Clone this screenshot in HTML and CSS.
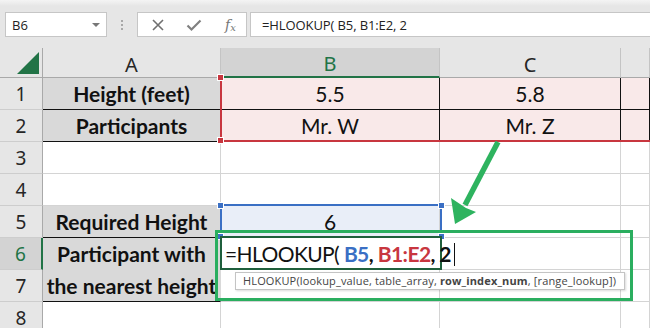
FILE: index.html
```html
<!DOCTYPE html>
<html lang="en">
<head>
  <meta charset="UTF-8" />
  <title>HLOOKUP nearest height</title>
  <link rel="stylesheet" href="styles.css">
</head>
<body>

  <div class="toolbar">
    <div class="name-box">
      <span>B6</span>
      <span class="caret"></span>
    </div>
    <div class="grip"><i></i><i></i><i></i></div>
    <div class="fx-buttons">
      <svg class="btn-icon" width="14" height="14" viewBox="0 0 14 14">
        <path d="M2 2 L12 12 M12 2 L2 12" stroke="#707070" stroke-width="1.6" fill="none"/>
      </svg>
      <svg class="btn-icon" width="16" height="14" viewBox="0 0 16 14">
        <path d="M1.5 7.5 L5.5 11.5 L14.5 2.5" stroke="#808080" stroke-width="2.2" fill="none"/>
      </svg>
      <span class="fx">f<sub>x</sub></span>
    </div>
    <div class="formula">=HLOOKUP( B5, B1:E2, 2</div>
  </div>

  <div class="sheet">
    <!-- column headers -->
    <div class="corner"><span class="select-all"></span></div>
    <div class="col-head">A</div>
    <div class="col-head active">B</div>
    <div class="col-head">C</div>
    <div class="col-head"></div>

    <!-- row 1 -->
    <div class="row-head">1</div>
    <div class="cell label">Height (feet)</div>
    <div class="cell data">5.5</div>
    <div class="cell data">5.8</div>
    <div class="cell data"></div>

    <!-- row 2 -->
    <div class="row-head">2</div>
    <div class="cell label">Participants</div>
    <div class="cell data">Mr. W</div>
    <div class="cell data">Mr. Z</div>
    <div class="cell data"></div>

    <!-- row 3 -->
    <div class="row-head">3</div>
    <div class="cell"></div>
    <div class="cell"></div>
    <div class="cell"></div>
    <div class="cell"></div>

    <!-- row 4 -->
    <div class="row-head">4</div>
    <div class="cell"></div>
    <div class="cell"></div>
    <div class="cell"></div>
    <div class="cell"></div>

    <!-- row 5 -->
    <div class="row-head">5</div>
    <div class="cell label">Required Height</div>
    <div class="cell lookup">6</div>
    <div class="cell"></div>
    <div class="cell"></div>

    <!-- rows 6 & 7, A6:A7 merged -->
    <div class="row-head active">6</div>
    <div class="cell label merged">Participant with<br>the nearest height</div>
    <div class="cell"></div>
    <div class="cell"></div>
    <div class="cell"></div>

    <div class="row-head">7</div>
    <div class="cell"></div>
    <div class="cell"></div>
    <div class="cell"></div>

    <!-- row 8 -->
    <div class="row-head">8</div>
    <div class="cell"></div>
    <div class="cell"></div>
    <div class="cell"></div>
    <div class="cell"></div>

    <!-- overlays -->
    <div class="range range-red">
      <span class="handle tl"></span>
      <span class="handle bl"></span>
    </div>
    <div class="range range-blue">
      <span class="handle tl"></span>
      <span class="handle tr"></span>
      <span class="handle bl"></span>
      <span class="handle br"></span>
    </div>

    <div class="editor">
      <span class="edit-text">=HLOOKUP( <b class="ref-blue">B5</b><b>,</b> <b class="ref-red">B1:E2</b><b>, 2</b><span class="cursor"></span></span>
    </div>

    <div class="tooltip">HLOOKUP(lookup_value, table_array, <b>row_index_num</b>, [range_lookup])</div>

    <div class="highlight"></div>

    <svg class="arrow" width="70" height="92" viewBox="0 0 70 92">
      <path d="M58 4 L25 67" stroke="#2eb35f" stroke-width="5.5" fill="none"/>
      <polygon points="15,86 36,74 26,70 11,60" fill="#2eb35f"/>
    </svg>
  </div>

</body>
</html>
```

FILE: styles.css
```css
body {
  margin: 0;
  width: 650px;
  height: 328px;
  overflow: hidden;
  background: #fff;
  font-family: "Lato", sans-serif;
}

/* formula bar */

.toolbar {
  height: 48px;
  box-sizing: border-box;
  padding-top: 12px;
  display: flex;
  align-items: flex-start;
  background: linear-gradient(#f4f4f4, #e6e6e6 6px);
}

.name-box,
.fx-buttons,
.formula {
  height: 25px;
  box-sizing: border-box;
  background: #fff;
  border: 1px solid #c6c6c6;
  display: flex;
  align-items: center;
  font-family: "Open Sans", sans-serif;
  font-size: 13px;
  color: #222;
}

.name-box {
  margin-left: 5px;
  width: 102px;
  padding: 0 6px 0 6px;
  justify-content: space-between;
}

.caret {
  width: 0;
  height: 0;
  border-left: 4px solid transparent;
  border-right: 4px solid transparent;
  border-top: 4px solid #777;
}

.grip {
  width: 30px;
  height: 25px;
  display: flex;
  flex-direction: column;
  align-items: center;
  justify-content: center;
  gap: 2px;
}

.grip i {
  width: 2px;
  height: 2px;
  background: #a8a8a8;
}

.fx-buttons {
  width: 110px;
  padding-left: 13px;
  gap: 21px;
}

.fx {
  font-family: "DejaVu Serif", serif;
  font-style: italic;
  font-size: 14px;
  color: #777;
  margin-left: 2px;
}

.fx sub {
  font-size: 10px;
  vertical-align: baseline;
  position: relative;
  top: 1px;
}

.formula {
  flex: 1;
  margin-left: 3px;
  padding-left: 11px;
  border-right: none;
  letter-spacing: -0.1px;
}

/* grid */

.sheet {
  position: relative;
  display: grid;
  grid-template-columns: 43px 178px 219px 181px 1fr;
  grid-template-rows: 30px repeat(8, 32px);
}

.corner,
.col-head,
.row-head {
  background: #e6e6e6;
  box-sizing: border-box;
  font-family: "Noto Sans", sans-serif;
  color: #262626;
  display: flex;
  align-items: center;
  justify-content: center;
}

.corner {
  border-right: 1px solid #a9a9a9;
  border-bottom: 1px solid #a9a9a9;
  align-items: flex-end;
  justify-content: flex-end;
  padding: 0 3px 3px 0;
}

.select-all {
  width: 22px;
  height: 22px;
  background: #217346;
  clip-path: polygon(100% 0, 100% 100%, 0 100%);
}

.col-head {
  font-size: 20px;
  border-right: 1px solid #c4c4c4;
  border-bottom: 1px solid #a9a9a9;
  padding-top: 3px;
}

.col-head.active {
  background: #d3d3d3;
  color: #217346;
  border-bottom: 2px solid #217346;
}

.row-head {
  font-size: 19px;
  border-right: 1px solid #a9a9a9;
  border-bottom: 1px solid #cdcdcd;
}

.row-head.active {
  background: #d3d3d3;
  color: #217346;
  border-right: 2px solid #217346;
}

.cell {
  box-sizing: border-box;
  border-right: 1px solid #d4d4d4;
  border-bottom: 1px solid #d4d4d4;
  display: flex;
  align-items: center;
  justify-content: center;
  font-size: 21px;
  color: #111;
  white-space: nowrap;
}

.cell.label {
  background: #d9d9d9;
  font-weight: bold;
  border-bottom-color: #111;
  border-right-color: #d9d9d9;
}

.cell.merged {
  grid-row: span 2;
  text-align: center;
  line-height: 32px;
}

.cell.data {
  background: #f9e9e9;
  border-right-color: #111;
  border-bottom-color: #111;
}

.cell.lookup {
  background: #e9eef8;
}

/* overlays */

.range {
  position: absolute;
  box-sizing: border-box;
}

.range-red {
  left: 220px;
  top: 28px;
  width: 460px;
  height: 66px;
  border: 2px solid #c8363f;
  border-top: none;
}

.range-blue {
  left: 220px;
  top: 156px;
  width: 222px;
  height: 34px;
  border: 2px solid #3a6fc4;
}

.handle {
  position: absolute;
  width: 5px;
  height: 5px;
  border: 1px solid #fff;
}

.range-red .handle { background: #c8363f; }
.range-blue .handle { background: #3a6fc4; }

.handle.tl { left: -5px; top: -4px; }
.range-red .handle.tl { top: -2px; }
.handle.tr { right: -5px; top: -4px; }
.handle.bl { left: -5px; bottom: -4px; }
.handle.br { right: -5px; bottom: -4px; }

.editor {
  position: absolute;
  left: 220px;
  top: 188px;
  width: 222px;
  height: 34px;
  box-sizing: border-box;
  border: 2px solid #1f5f3c;
  background: #fff;
}

.edit-text {
  position: absolute;
  left: 3px;
  top: 2px;
  line-height: 28px;
  font-size: 21px;
  letter-spacing: -0.6px;
  color: #111;
  white-space: nowrap;
}

.edit-text b {
  font-weight: bold;
}

.ref-blue { color: #3a6fc4; }
.ref-red { color: #c8363f; }

.cursor {
  display: inline-block;
  width: 1px;
  height: 23px;
  background: #111;
  vertical-align: -4px;
  margin-left: 3px;
}

.tooltip {
  position: absolute;
  left: 235px;
  top: 224px;
  width: 390px;
  height: 18px;
  box-sizing: border-box;
  padding-left: 7px;
  background: #fff;
  border: 1px solid #c4c4c4;
  box-shadow: 1px 1px 2px rgba(0, 0, 0, 0.15);
  font-family: "Open Sans", sans-serif;
  font-size: 11px;
  letter-spacing: 0.15px;
  line-height: 16px;
  color: #444;
  white-space: nowrap;
}

.highlight {
  position: absolute;
  left: 215px;
  top: 182px;
  width: 418px;
  height: 71px;
  box-sizing: border-box;
  border: 3px solid #2aae5f;
}

.arrow {
  position: absolute;
  left: 440px;
  top: 90px;
}
```
